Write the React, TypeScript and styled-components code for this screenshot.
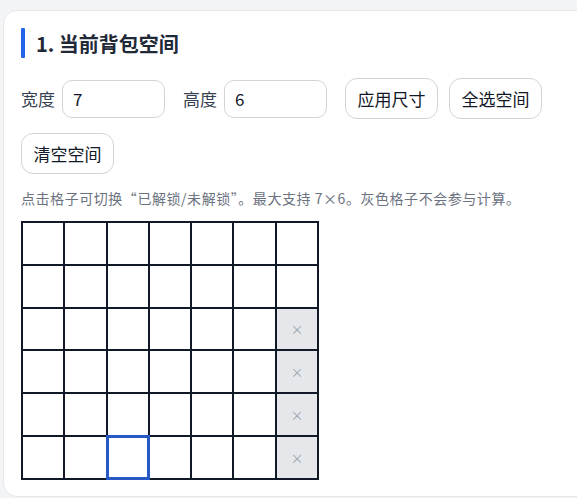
import React, { useState } from 'react';
import styled, { createGlobalStyle } from 'styled-components';

const COLS = 7;
const ROWS = 6;

const GlobalStyle = createGlobalStyle`
    html, body {
        margin: 0;
        padding: 0;
        background: #f3f4f6;
        overflow: hidden;
        font-family: "Noto Sans CJK SC", "Noto Sans", "Liberation Sans", sans-serif;
    }
`;

const Page = styled.div`
    padding: 10px 0 0 3px;
    min-height: 100vh;
    box-sizing: border-box;
`;

const Card = styled.section`
    margin-right: -16px;
    background: #fff;
    border: 1px solid #e5e7eb;
    border-radius: 14px;
    padding: 17px 18px 16px 17px;
    box-sizing: border-box;
`;

const Title = styled.h2`
    margin: 0;
    display: flex;
    align-items: center;
    gap: 11px;
    height: 30px;
    font-size: 20px;
    font-weight: 700;
    color: #1f2937;
    &::before {
        content: "";
        width: 4px;
        height: 30px;
        background: #2563eb;
        border-radius: 1px;
    }
`;

const Controls = styled.div`
    display: flex;
    flex-wrap: wrap;
    align-items: center;
    gap: 14px 11px;
    margin-top: 20px;
`;

const Field = styled.label`
    display: flex;
    align-items: center;
    gap: 7px;
    margin-right: 7px;
    font-size: 17px;
    color: #374151;
`;

const NumInput = styled.input`
    width: 103px;
    height: 38px;
    box-sizing: border-box;
    border: 1px solid #d1d5db;
    border-radius: 10px;
    padding: 0 10px;
    font-size: 17px;
    font-family: inherit;
    color: #111827;
    outline: none;
`;

const Button = styled.button`
    height: 41px;
    padding: 0 11.5px;
    background: #fff;
    border: 1px solid #d1d5db;
    border-radius: 12px;
    font-size: 17px;
    font-family: inherit;
    color: #111827;
    cursor: pointer;
`;

const Hint = styled.p`
    margin: 14px 0 13px;
    font-size: 14px;
    line-height: 20px;
    letter-spacing: 0.55px;
    color: #6b7280;
`;

const Grid = styled.div<{ $cols: number }>`
    display: inline-grid;
    grid-template-columns: repeat(${p => p.$cols}, 40.3px);
    grid-auto-rows: 40.8px;
    gap: 2px;
    padding: 2px;
    background: #111827;
`;

const Cell = styled.div<{ $locked: boolean; $active: boolean }>`
    position: relative;
    display: flex;
    align-items: center;
    justify-content: center;
    background: ${p => (p.$locked ? '#e5e7eb' : '#fff')};
    color: #9ca3af;
    font-size: 13px;
    cursor: pointer;
    ${p => p.$active && `
        z-index: 1;
        outline: 3px solid #2858c4;
        outline-offset: -1px;
    `}
`;

const App = () => {
    const [w, setW] = useState('7');
    const [h, setH] = useState('6');
    const [locked, setLocked] = useState<boolean[]>(
        Array.from({ length: COLS * ROWS }, (_, i) => i % COLS === 6 && Math.floor(i / COLS) >= 2)
    );
    const active = 5 * COLS + 2;

    const toggle = (i: number) => {
        setLocked(prev => prev.map((v, j) => (j === i ? !v : v)));
    };

    return (
        <>
            <GlobalStyle />
            <Page>
                <Card>
                    <Title>1. 当前背包空间</Title>
                    <Controls>
                        <Field>
                            宽度
                            <NumInput value={w} onChange={e => setW(e.target.value)} />
                        </Field>
                        <Field>
                            高度
                            <NumInput value={h} onChange={e => setH(e.target.value)} />
                        </Field>
                        <Button>应用尺寸</Button>
                        <Button>全选空间</Button>
                        <Button>清空空间</Button>
                    </Controls>
                    <Hint>点击格子可切换“已解锁/未解锁”。最大支持 7×6。灰色格子不会参与计算。</Hint>
                    <Grid $cols={COLS}>
                        {locked.map((isLocked, i) => (
                            <Cell key={i} $locked={isLocked} $active={i === active} onClick={() => toggle(i)}>
                                {isLocked ? '×' : ''}
                            </Cell>
                        ))}
                    </Grid>
                </Card>
            </Page>
        </>
    );
};

export default App;
